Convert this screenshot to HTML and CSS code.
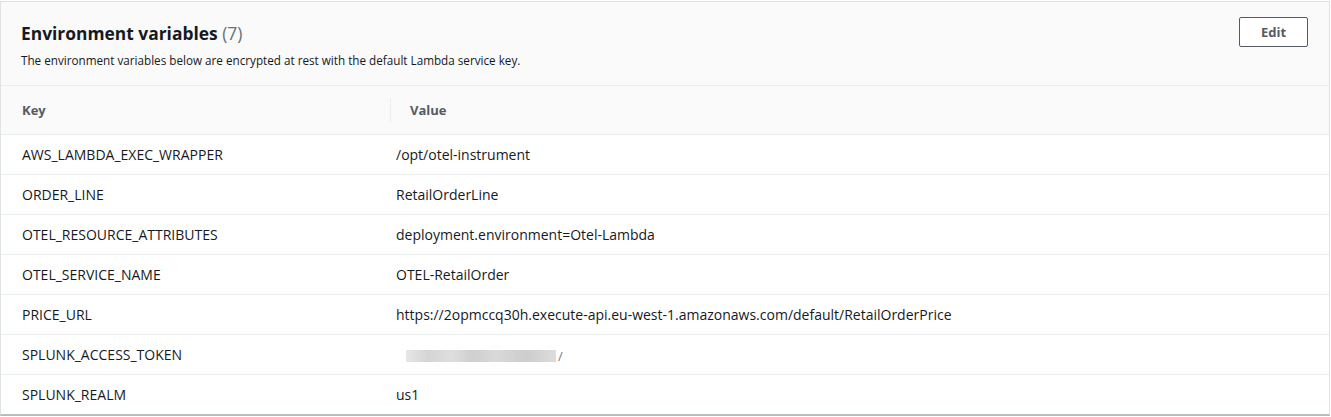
FILE: index.html
```html
<!DOCTYPE html>
<html>
<head>
<meta charset="utf-8">
<link rel="stylesheet" href="styles.css">
</head>
<body>
<div class="panel">
  <div class="panel-header">
    <div class="titles">
      <h2 class="title">Environment variables <span class="count">(7)</span></h2>
      <p class="desc">The environment variables below are encrypted at rest with the default Lambda service key.</p>
    </div>
    <button class="btn">Edit</button>
  </div>
  <table class="tbl">
    <thead>
      <tr><th class="c-key"><span class="th-in">Key</span></th><th class="c-val"><span class="th-in th-div">Value</span></th></tr>
    </thead>
    <tbody>
      <tr><td>AWS_LAMBDA_EXEC_WRAPPER</td><td>/opt/otel-instrument</td></tr>
      <tr><td>ORDER_LINE</td><td>RetailOrderLine</td></tr>
      <tr><td>OTEL_RESOURCE_ATTRIBUTES</td><td>deployment.environment=Otel-Lambda</td></tr>
      <tr><td>OTEL_SERVICE_NAME</td><td>OTEL-RetailOrder</td></tr>
      <tr><td>PRICE_URL</td><td>https://2opmccq30h.execute-api.eu-west-1.amazonaws.com/default/RetailOrderPrice</td></tr>
      <tr><td>SPLUNK_ACCESS_TOKEN</td><td><span class="redact"><span class="redact-bar"></span><span class="redact-end">/</span></span></td></tr>
      <tr><td>SPLUNK_REALM</td><td>us1</td></tr>
    </tbody>
  </table>
</div>
</body>
</html>
```
FILE: styles.css
```css
html, body {
  margin: 0;
  padding: 0;
  background: #ffffff;
}
body {
  font-family: "Open Sans", "Liberation Sans", Arial, sans-serif;
  color: #16191f;
  padding-top: 1px;
}
.panel {
  width: 1328px;
  border: 1px solid #dfe3e3;
  border-bottom: 2px solid #b7bcbf;
  background: #ffffff;
}
.panel-header {
  background: #fafafa;
  display: flex;
  justify-content: space-between;
  align-items: flex-start;
  padding: 15px 20px 0 20px;
  height: 68px;
  border-bottom: 1px solid #eaeded;
}
.title {
  margin: 5px 0 0 0;
  font-size: 17.4px;
  font-weight: 700;
  line-height: 22px;
  color: #16191f;
  letter-spacing: 0;
}
.count {
  font-weight: 400;
  color: #687078;
}
.desc {
  margin: 9px 0 0 0;
  font-size: 11.7px;
  line-height: 14px;
  color: #16191f;
}
.btn {
  margin-top: 0;
  width: 69px;
  height: 30px;
  border: 1px solid #545b64;
  border-radius: 2px;
  background: #ffffff;
  color: #545b64;
  font-family: inherit;
  font-size: 13px;
  font-weight: 700;
  padding: 0;
  margin-right: 1px;
}
.tbl {
  width: 100%;
  border-collapse: collapse;
}
.tbl th {
  background: #fafafa;
  height: 48px;
  text-align: left;
  font-size: 13px;
  font-weight: 700;
  color: #545b64;
  padding: 0;
  border-bottom: 1px solid #eaeded;
}
.c-key { width: 389px; }
.th-in {
  display: flex;
  align-items: center;
  height: 24px;
  padding-left: 21px;
}
.th-div {
  border-left: 1px solid #eaeded;
  padding-left: 19px;
}
.tbl td {
  height: 39px;
  padding: 0 0 0 21px;
  font-size: 14px;
  color: #16191f;
  border-bottom: 1px solid #eaeded;
}
.tbl td + td {
  padding-left: 6px;
}
.tbl tbody tr:last-child td {
  border-bottom: none;
}
.redact {
  display: inline-flex;
  align-items: center;
  gap: 2px;
  vertical-align: middle;
  padding-left: 10px;
}
.redact-bar {
  display: inline-block;
  width: 150px;
  height: 12px;
  background: linear-gradient(90deg, #e6e6e6 0%, #d4d4d4 15%, #dedede 30%, #cfcfcf 45%, #d9d9d9 60%, #cdcdcd 80%, #dcdcdc 100%);
  filter: blur(0.6px);
}
.redact-end {
  font-size: 13px;
  color: #777;
}
```
